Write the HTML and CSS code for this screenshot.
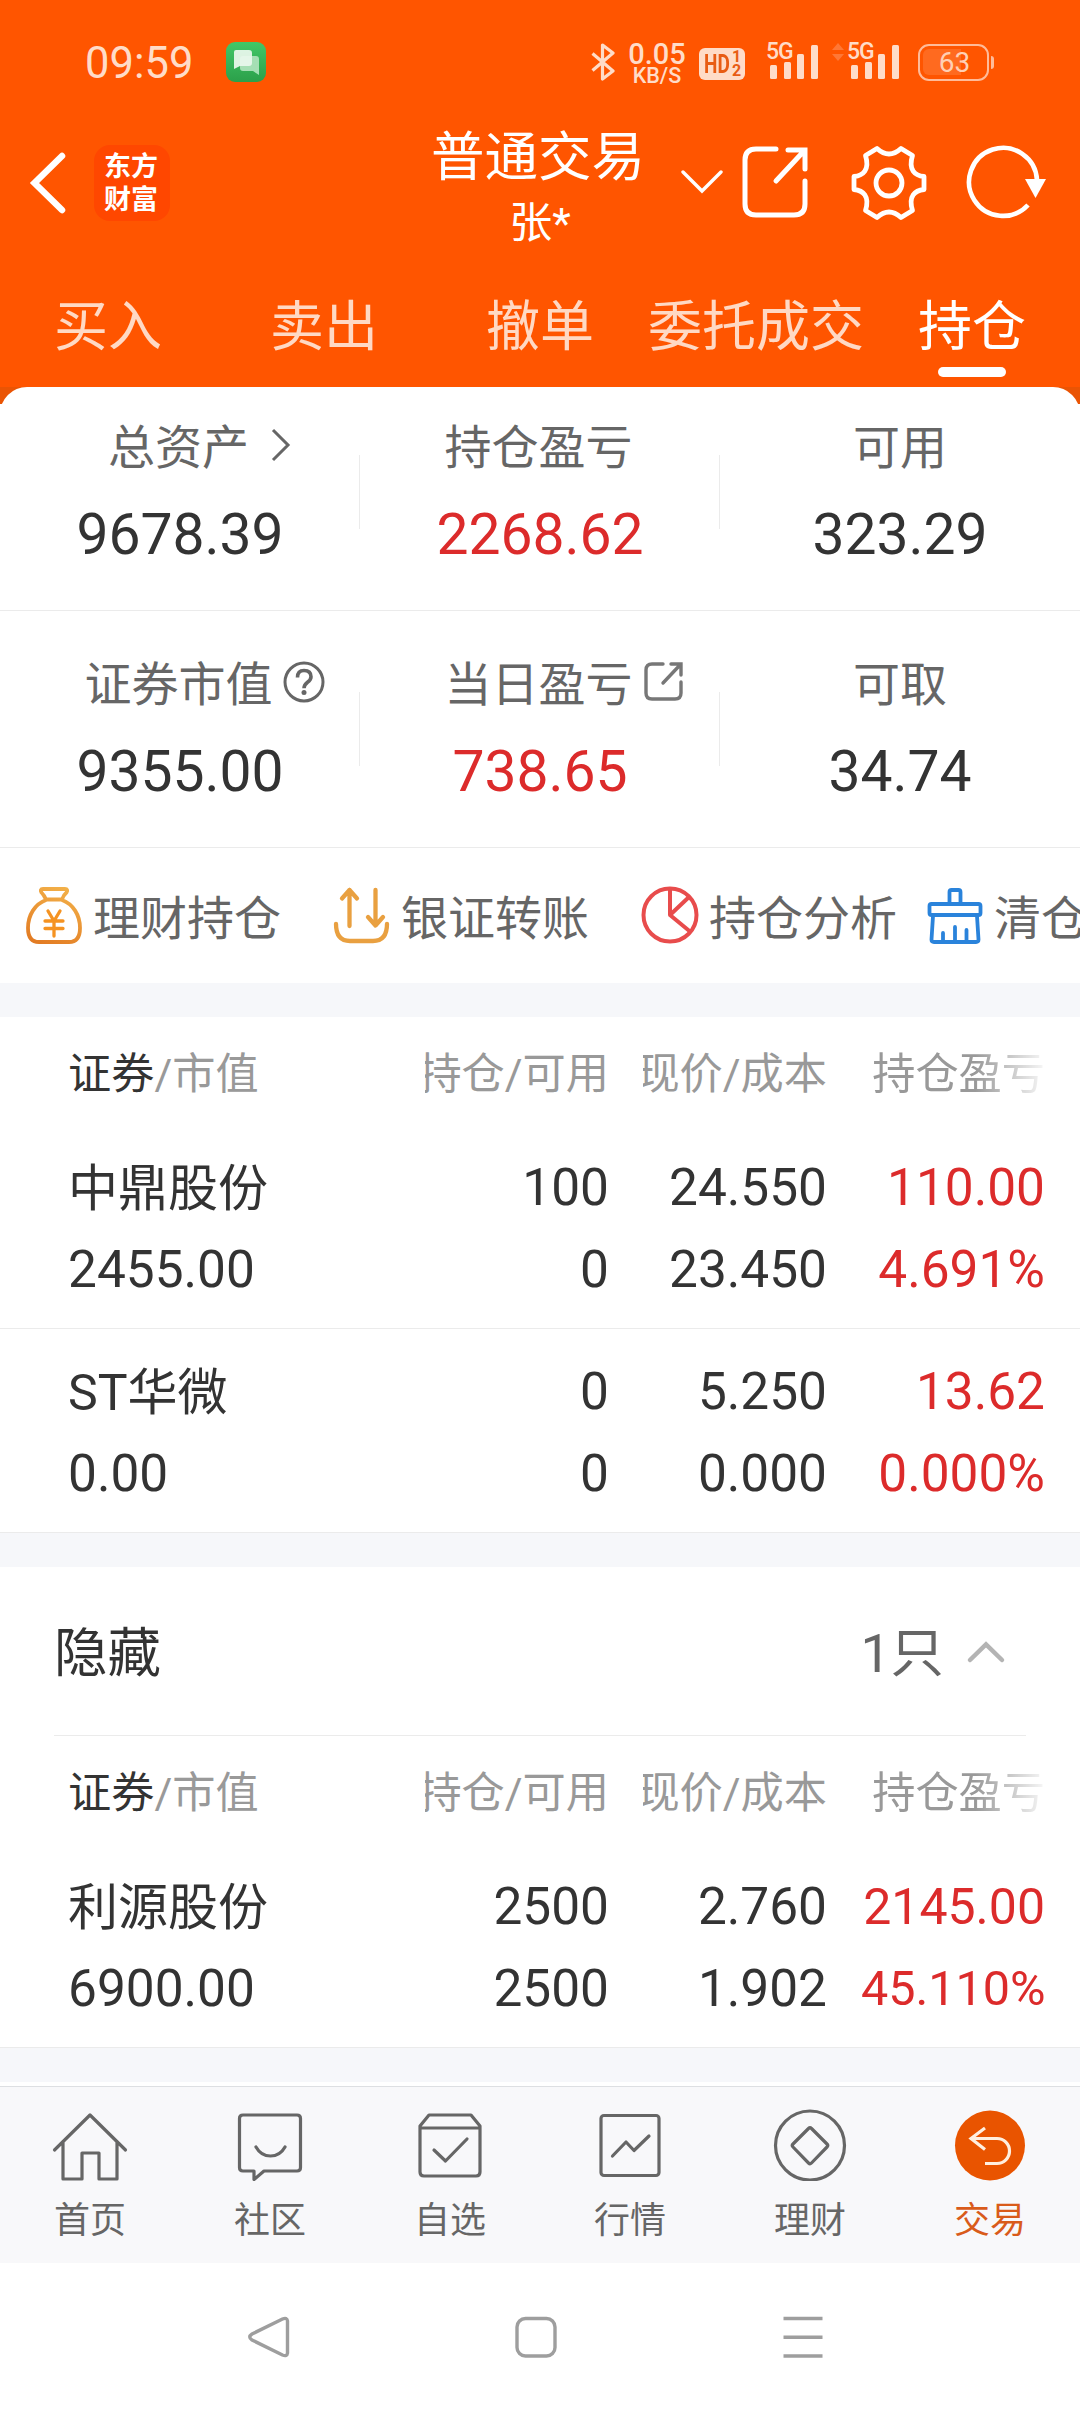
FILE: index.html
```html
<!DOCTYPE html>
<html lang="zh-CN">
<head>
<meta charset="utf-8">
<title>普通交易 - 持仓</title>
<link rel="stylesheet" href="styles.css">
</head>
<body>
<header class="top">
  <div class="status">
    <span class="clock">09:59</span>
    <svg class="msg-icon" width="40" height="40" viewBox="0 0 40 40">
      <defs><linearGradient id="msg" x1="0" y1="0" x2="0" y2="1"><stop offset="0" stop-color="#42c767"/><stop offset="1" stop-color="#2ba04a"/></linearGradient></defs>
      <rect width="40" height="40" rx="9" fill="url(#msg)"/>
      <path d="M17 14h13q3 0 3 3v16l-6-4H17q-3 0-3-3v-9q0-3 3-3z" fill="#a5dfb4"/>
      <path d="M10 8h13q3 0 3 3v10q0 3-3 3H14l-6 3V10q0-2 2-2z" fill="#e9f8ed" fill-opacity=".93"/>
    </svg>
    <div class="status-right">
      <svg class="bt" width="24" height="40" viewBox="0 0 24 40"><path d="M1.500 11.500 22 29 11.500 37V3L22 11 1.500 28.500" fill="none" stroke="#ffdcc8" stroke-width="3.200" stroke-linejoin="round"/></svg>
      <div class="speed"><span class="speed-num">0.05</span><span class="speed-unit">KB/S</span></div>
      <div class="hd"><span class="hd-main">HD</span><span class="hd-sub"><i>1</i><i>2</i></span></div>
      <div class="signal">
        <span class="net">5G</span>
        <svg width="50" height="36" viewBox="0 0 50 36" fill="#ffdcc8"><rect y="21" width="7" height="14" rx="1.500"/><rect x="14" y="18" width="7" height="17" rx="1.500"/><rect x="27" y="10" width="7" height="25" rx="1.500"/><rect x="41" y="1" width="7" height="34" rx="1.500"/></svg>
      </div>
      <svg class="traffic" width="12" height="18" viewBox="0 0 12 18" fill="#ff7735"><path d="M6 0l6 7H0zM0 11h12l-6 7z"/></svg>
      <div class="signal second">
        <span class="net">5G</span>
        <svg width="50" height="36" viewBox="0 0 50 36" fill="#ffdcc8"><rect y="21" width="7" height="14" rx="1.500"/><rect x="14" y="18" width="7" height="17" rx="1.500"/><rect x="27" y="10" width="7" height="25" rx="1.500"/><rect x="41" y="1" width="7" height="34" rx="1.500"/></svg>
      </div>
      <div class="battery"><span>63</span></div>
      <div class="battery-tip"></div>
    </div>
  </div>

  <div class="titlebar">
    <div class="title-left">
      <svg width="40" height="64" viewBox="0 0 40 64"><path d="M34 5 6.500 32 34 59" fill="none" stroke="#fff" stroke-width="6.500" stroke-linecap="round"/></svg>
      <div class="brand"><span>东方</span><span>财富</span></div>
    </div>
    <div class="title"><h1>普通交易</h1><p>张*</p></div>
    <div class="title-right">
      <svg class="caret" width="42" height="24" viewBox="0 0 42 24"><path d="M2 2l19 19L40 2" fill="none" stroke="#fff" stroke-width="3.400" stroke-linecap="round"/></svg>
      <svg class="share" width="68" height="74" viewBox="0 0 68 74" fill="none" stroke="#fff" stroke-width="5" stroke-linecap="round"><path d="M35 4H15Q4 4 4 15v44q0 11 11 11h38q11 0 11-11V36"/><path d="M47 5h17v19M63 6 35 36"/></svg>
      <svg class="gear" width="78" height="78" viewBox="-39 -39 78 78" fill="none" stroke="#fff" stroke-width="4.800" stroke-linejoin="round"><path d="M-12-34.500Q0-23.500 12-34.500L23.500-27.500C19-13 26-7.500 35-6.500V6.500C26 7.500 19 13 23.500 27.500L12 34.500Q0 23.500-12 34.500L-23.500 27.500C-19 13-26 7.500-35 6.500V-6.500C-26-7.500-19-13-23.500-27.500Z"/><circle r="13"/></svg>
      <svg class="reload" width="82" height="76" viewBox="0 0 82 76"><path d="M71 35A34 34 0 1 0 62 60" fill="none" stroke="#fff" stroke-width="4.600"/><path d="M59 34h21L69.500 53z" fill="#fff"/></svg>
    </div>
  </div>

  <nav class="tabs">
    <a>买入</a><a>卖出</a><a>撤单</a><a>委托成交</a><a class="active">持仓</a>
  </nav>
</header>

<section class="summary">
  <div class="sheet">
    <div class="sum-row first">
      <div class="sum-cell"><div class="sum-label">总资产<span class="mark"><svg class="m-arrow" width="20" height="34" viewBox="0 0 20 34"><path d="M2 2l15 15L2 32" fill="none" stroke="#666" stroke-width="3"/></svg></span></div><div class="sum-value">9678.39</div></div>
      <div class="sum-cell"><div class="sum-label">持仓盈亏</div><div class="sum-value up">2268.62</div></div>
      <div class="sum-cell"><div class="sum-label end">可用</div><div class="sum-value">323.29</div></div>
    </div>
    <div class="sum-row">
      <div class="sum-cell"><div class="sum-label">证券市值<span class="mark"><svg class="m-help" width="42" height="42" viewBox="0 0 42 42" fill="none" stroke="#666"><circle cx="21" cy="21" r="19" stroke-width="3"/><path d="M14.500 16.500q0-7 6.500-7 7 0 7 6.300 0 3-3.500 5.500-3.500 2.700-3.500 6" stroke-width="3.600"/><circle cx="21" cy="31.500" r="2.500" fill="#666" stroke="none"/></svg></span></div><div class="sum-value">9355.00</div></div>
      <div class="sum-cell"><div class="sum-label">当日盈亏<span class="mark"><svg class="m-share" width="40" height="42" viewBox="0 0 40 42" fill="none" stroke="#777" stroke-width="3.400" stroke-linecap="round"><path d="M20 3H9Q3 3 3 9v23q0 6 6 6h23q6 0 6-6V21"/><path d="M28 3h10v11M37 4 20 22"/></svg></span></div><div class="sum-value up">738.65</div></div>
      <div class="sum-cell"><div class="sum-label end">可取</div><div class="sum-value">34.74</div></div>
    </div>
    <div class="quick">
      <div class="q-item">
        <svg width="60" height="60" viewBox="0 0 60 60" fill="none" stroke="url(#bag)" stroke-width="3.800" stroke-linecap="round" stroke-linejoin="round">
          <defs><linearGradient id="bag" gradientUnits="userSpaceOnUse" x1="40" y1="0" x2="15" y2="60"><stop offset="0" stop-color="#f3b24a"/><stop offset="1" stop-color="#e27a22"/></linearGradient></defs>
          <path d="M22 14.500Q20 10 17.500 7.500 15.500 4 19 4h22q3.500 0 1.500 3.500Q39.500 10 38 14.500zM22 15C11 19 4 30 4 43q0 14 11 14h30q11 0 11-14C56 30 49 19 38 15"/>
          <path stroke="#f59322" stroke-width="3.300" d="M24 26l6 10 6-10M30 36v15M21 36h18M21 43.500h18"/>
        </svg>
        <span>理财持仓</span>
      </div>
      <div class="q-item">
        <svg width="60" height="60" viewBox="0 0 60 60" fill="none" stroke="#e9a040" stroke-width="4.300" stroke-linecap="round" stroke-linejoin="round"><path d="M4 39q0 17 14 17h23q14 0 14-17"/><path d="M17.500 41V5M10 13.500 17.500 5l7.500 8.500M43.500 5v35M36 32l7.500 8.500L51 32"/></svg>
        <span>银证转账</span>
      </div>
      <div class="q-item">
        <svg width="60" height="60" viewBox="0 0 60 60" fill="none" stroke="#e84c4c" stroke-width="4"><circle cx="30" cy="30" r="26.500"/><path d="M30 3.500V30L49 12M30 30l20 16.500" stroke-linejoin="round"/></svg>
        <span>持仓分析</span>
      </div>
      <div class="q-item">
        <svg width="60" height="60" viewBox="0 0 60 60" fill="none" stroke="#2a83db" stroke-width="3.800" stroke-linejoin="round" stroke-linecap="round"><path d="M24.500 18V7q0-2 2-2h7q2 0 2 2v11"/><rect x="4.500" y="19" width="51" height="11" rx="2"/><path d="M8 31 6.500 54.500q0 2.500 2.500 2.500h42q2.500 0 2.500-2.500L52 31M18 56v-8M30 56V42M41.500 56V45"/></svg>
        <span>清仓</span>
      </div>
    </div>
  </div>
</section>

<section class="table">
  <div class="t-head"><div class="c-name"><b>证券</b>/市值</div><div class="c"><span>持仓/可用</span></div><div class="c"><span>现价/成本</span></div><div class="c fade"><span>持仓盈亏</span></div></div>
  <div class="t-row">
    <div class="c-name"><div class="name">中鼎股份</div><div>2455.00</div></div>
    <div class="c"><div>100</div><div>0</div></div>
    <div class="c"><div>24.550</div><div>23.450</div></div>
    <div class="c up"><div>110.00</div><div>4.691%</div></div>
  </div>
  <div class="t-row">
    <div class="c-name"><div class="name">ST华微</div><div>0.00</div></div>
    <div class="c"><div>0</div><div>0</div></div>
    <div class="c"><div>5.250</div><div>0.000</div></div>
    <div class="c up"><div>13.62</div><div>0.000%</div></div>
  </div>
</section>

<section class="table">
  <div class="hidden-head"><span>隐藏</span><span class="count">1只</span><svg width="40" height="24" viewBox="0 0 40 24"><path d="M4 20 20 4.500 36 20" fill="none" stroke="#b4b4b4" stroke-width="4.500" stroke-linecap="round"/></svg></div>
  <div class="t-head"><div class="c-name"><b>证券</b>/市值</div><div class="c"><span>持仓/可用</span></div><div class="c"><span>现价/成本</span></div><div class="c fade"><span>持仓盈亏</span></div></div>
  <div class="t-row">
    <div class="c-name"><div class="name">利源股份</div><div>6900.00</div></div>
    <div class="c"><div>2500</div><div>2500</div></div>
    <div class="c"><div>2.760</div><div>1.902</div></div>
    <div class="c up"><div class="fit">2145.00</div><div class="fit-s">45.110%</div></div>
  </div>
</section>

<nav class="tabbar">
  <a><svg width="80" height="80" viewBox="0 0 80 80"><path d="M4.500 49 40 14l35.500 35M13 41v37h19V52h17v26h18V41"/></svg>首页</a>
  <a><svg width="80" height="80" viewBox="0 0 80 80"><path d="M13 14h54q3.500 0 3.500 3.500v49q0 3.500-3.500 3.500H34l-10 8.500V70H13q-3.500 0-3.500-3.500v-49Q9.500 14 13 14z"/><path d="M26 46q5 9 14.500 9T55 46"/></svg>社区</a>
  <a><svg width="80" height="80" viewBox="0 0 80 80"><path d="M10 25l9-11h42l9 11v46q0 4-4 4H14q-4 0-4-4zM10 27h60M24 49l11.500 11L57 38"/></svg>自选</a>
  <a><svg width="80" height="80" viewBox="0 0 80 80"><rect x="11" y="14.500" width="58" height="60" rx="3"/><path d="M22.500 55 36 41l8 8.500L59 35"/></svg>行情</a>
  <a><svg width="80" height="80" viewBox="0 0 80 80"><circle cx="40" cy="44.500" r="34.500"/><path d="M38.500 27.500q1.500-1.500 3 0L57 43q1.500 1.500 0 3L41.500 62q-1.500 1.500-3 0L23 46q-1.500-1.500 0-3z"/></svg>理财</a>
  <a class="active"><svg width="80" height="80" viewBox="0 0 80 80"><circle cx="40" cy="44.500" r="35" class="disc"/><path class="back" d="M35 27 21 37.500 35 48.500M22 37.500h25a12.500 12.500 0 0 1 0 25H35"/></svg>交易</a>
</nav>

<footer class="sysnav">
  <svg width="44" height="44" viewBox="0 0 44 44"><path d="M35.500 4Q40 2 40.500 6v32q-.5 4-5 2L5 25Q.5 22 5 19z"/></svg>
  <svg width="44" height="44" viewBox="0 0 44 44"><rect x="3" y="3.500" width="38" height="37.500" rx="8.500"/></svg>
  <svg width="44" height="44" viewBox="0 0 44 44"><path d="M2.500 3.500h39M2.500 22.300h39M2.500 41h39"/></svg>
</footer>
</body>
</html>
```
FILE: styles.css
```css
* { box-sizing: border-box; }
body {
  margin: 0;
  width: 1080px;
  height: 2412px;
  overflow: hidden;
  background: #fff;
  color: #333;
  font-family: Roboto, "Noto Sans CJK SC", sans-serif;
  display: flex;
  flex-direction: column;
}
svg { display: block; flex: none; }
h1, p { margin: 0; font-weight: 400; }

/* Header */
.top { height: 387px; background: #ff5500; color: #fff; }
.status { height: 123px; padding: 42px 86px 0 85px; display: flex; align-items: flex-start; color: #ffdcc8; }
.clock { width: 141px; font-size: 43.500px; line-height: 43px; }
.status-right { display: flex; margin-left: 325px; }
.bt { margin-left: 0; }
.speed { width: 60px; margin: 0 0 0 12px; display: flex; flex-direction: column; align-items: center; font-weight: 500; }
.speed-num { font-size: 29px; line-height: 24px; }
.speed-unit { font-size: 21.500px; line-height: 19px; }
.hd { width: 46px; height: 32px; margin: 6px 0 0 12px; padding-left: 5px; border-radius: 6px; background: #ffdcc8; color: #e85c14; display: flex; }
.hd-main { width: 28px; font: 700 25px/33px Roboto, sans-serif; transform: scaleX(.76); transform-origin: left; }
.hd-sub { display: flex; flex-direction: column; padding-top: 2px; }
.hd-sub i { font: 700 16px/14px Roboto, sans-serif; }
.signal { width: 54px; margin-left: 21px; display: flex; flex-direction: column; }
.signal .net { height: 2px; line-height: 19px; font-size: 23px; font-weight: 500; letter-spacing: -1px; }
.signal svg { margin-left: 4px; }
.traffic { margin: 1px 0 0 12px; }
.signal.second { margin-left: 3px; }
.battery { width: 71px; height: 37px; margin: 2px 0 0 17px; border: 2.500px solid #ffbb99; border-radius: 11px; padding: 3px; }
.battery span { display: block; height: 26px; border-radius: 6px; background: linear-gradient(90deg, #ff6a1f 62%, transparent 62%); font-size: 28px; line-height: 27px; text-align: center; padding-left: 2px; color: #ffcfb4; }
.battery-tip { width: 3px; height: 13px; margin: 14px 0 0 2px; border-radius: 0 3px 3px 0; background: #ffbb99; }

.titlebar { height: 121px; display: grid; grid-template-columns: 432px 216px 432px; }
.title-left { display: flex; padding: 28px 0 0 28px; }
.brand { width: 76px; height: 76px; margin: -6px 0 0 26px; padding: 0 2px 5px 0; border-radius: 16px; background: #ff4700; display: flex; flex-direction: column; align-items: center; justify-content: center; font: 700 27px/33px "Noto Sans CJK SC", sans-serif; }
.title { text-align: center; padding-top: 5px; }
.title h1 { font-size: 53.500px; line-height: 60px; margin: 0 -20px 0 -24px; }
.title p { font-size: 43px; line-height: 70px; }
.title-right { display: flex; }
.caret { margin: 47px 0 0 33px; }
.share { margin: 22px 0 0 18px; }
.gear { margin: 21px 0 0 41px; }
.reload { margin: 22px 0 0 38px; }

.tabs { display: grid; grid-template-columns: repeat(5, 216px); }
.tabs a { font-size: 54px; line-height: 60px; padding-top: 54px; text-align: center; color: #ffd9c4; white-space: nowrap; }
.tabs .active { color: #fff; }
.tabs .active::after { content: ""; display: block; width: 68px; height: 10px; margin: 9px auto 0; border-radius: 5px; background: #fff; }

/* Asset summary */
.summary { background: linear-gradient(#ea5404 17px, #fff 17px); }
.sheet { background: #fff; border-radius: 27px 27px 0 0; }
.sum-row { height: 237px; padding-top: 44px; border-bottom: 1px solid #ebebeb; display: grid; grid-template-columns: repeat(3, 360px); text-align: center; }
.sum-row.first { height: 224px; padding-top: 31px; }
.sum-cell { background: linear-gradient(#ebebeb, #ebebeb) right 37px / 1px 74px no-repeat; }
.sum-cell:last-child { background: none; }
.sum-label { height: 60px; padding-right: 3px; font-size: 47px; line-height: 59px; color: #666; display: flex; justify-content: center; }
.sum-label.end { padding-right: 0; }
.mark { width: 0; }
.m-arrow { margin: 10px 0 0 22px; }
.m-help { margin: 6px 0 0 10px; }
.m-share { margin: 6px 0 0 10px; }
.sum-value { margin-top: 22px; font-size: 57px; line-height: 70px; }
.up { color: #dc2b2b; }

/* Shortcuts */
.quick { height: 135px; padding-left: 24px; display: flex; align-items: center; overflow: hidden; }
.q-item { width: 308px; flex: none; display: flex; align-items: center; color: #666; font-size: 47px; line-height: 60px; white-space: nowrap; }
.q-item svg { margin-top: -1px; }
.q-item span { padding: 6px 0 0 9px; }
.q-item:nth-child(3) { width: 285px; }

/* Holdings */
.table { border-top: 34px solid #f6f7fa; }
.t-head, .t-row { padding-left: 68px; display: grid; grid-template-columns: 323px repeat(3, 184px); column-gap: 34px; }
.t-head { height: 108px; padding-top: 7px; font-size: 43.200px; line-height: 101px; color: #999; }
.t-head b { font-weight: 400; color: #333; }
.t-head .c { display: flex; justify-content: flex-end; overflow: hidden; white-space: nowrap; }
.t-head .c span { flex: none; }
.fade { -webkit-mask-image: linear-gradient(90deg, #000 62%, transparent 103%); mask-image: linear-gradient(90deg, #000 62%, transparent 103%); }
.t-row { height: 204px; padding-top: 22px; border-bottom: 1px solid #ebebeb; font-size: 51.400px; line-height: 82px; }
.t-row .c { text-align: right; white-space: nowrap; }
.t-row .name { height: 82px; padding-top: 1px; font-size: 50px; }
.t-row .fit { font-size: 50px; }
.t-row .fit-s { font-size: 48.500px; }
.hidden-head { height: 169px; margin: 0 54px; border-bottom: 1px solid #ebebeb; display: flex; align-items: center; padding-right: 20px; font-size: 53.500px; line-height: 60px; }
.hidden-head span { padding-top: 6px; }
.hidden-head svg { margin-top: 2px; }
.hidden-head .count { margin: 0 22px 0 auto; color: #666; }

/* Bottom tabs */
.table:last-of-type { border-bottom: 34px solid #f6f7fa; }
.tabbar { margin-top: 4px; height: 177px; border-top: 1px solid #dddfe2; background: #f8f8fa; display: grid; grid-template-columns: repeat(6, 180px); }
.tabbar a { display: flex; flex-direction: column; align-items: center; padding-top: 14px; font-size: 36px; line-height: 80px; color: #666; }
.tabbar svg { fill: none; stroke: #666; stroke-width: 3.200px; stroke-linejoin: round; stroke-linecap: round; }
.tabbar .active { color: #d95b1a; }
.tabbar .disc { fill: #e95400; stroke: none; }
.tabbar .back { stroke: #ffefdf; stroke-linejoin: miter; stroke-linecap: butt; }

.sysnav { padding: 52px 255px 0 247px; display: flex; justify-content: space-between; }
.sysnav svg { fill: none; stroke: #9e9e9e; stroke-width: 3.400px; }
```
